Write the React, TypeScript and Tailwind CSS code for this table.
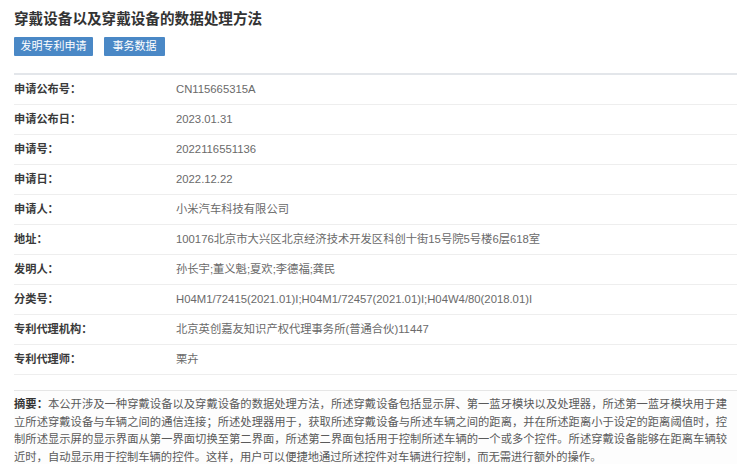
const rows: [string, string][] = [
  ["申请公布号：", "CN115665315A"],
  ["申请公布日：", "2023.01.31"],
  ["申请号：", "2022116551136"],
  ["申请日：", "2022.12.22"],
  ["申请人：", "小米汽车科技有限公司"],
  ["地址：", "100176北京市大兴区北京经济技术开发区科创十街15号院5号楼6层618室"],
  ["发明人：", "孙长宇;董义魁;夏欢;李德福;龚民"],
  ["分类号：", "H04M1/72415(2021.01)I;H04M1/72457(2021.01)I;H04W4/80(2018.01)I"],
  ["专利代理机构：", "北京英创嘉友知识产权代理事务所(普通合伙)11447"],
  ["专利代理师：", "栗卉"],
]

export default function App() {
  return (
    <div
      className="w-[740px] h-[464px] overflow-hidden bg-white pl-[14px] pr-[3px] pt-[9px]"
      style={{ fontFamily: '"Liberation Sans", "Noto Sans CJK SC", sans-serif' }}
    >
      <h1 className="text-[14.6px] leading-[20px] font-bold text-[#333]">
        穿戴设备以及穿戴设备的数据处理方法
      </h1>

      <div className="mt-[8px] flex gap-[11px]">
        <button className="h-[19px] w-[79px] bg-[#4a88c6] text-white text-[11px] leading-[19px] rounded-[1px]">
          发明专利申请
        </button>
        <button className="h-[19px] w-[61px] bg-[#4a88c6] text-white text-[11px] leading-[19px] rounded-[1px]">
          事务数据
        </button>
      </div>

      <div className="mt-[17px] border-t-2 border-[#e3e6ea]">
        {rows.map(([label, value]) => (
          <div key={label} className="flex items-center h-[30px] border-b border-[#eeeeee]">
            <div className="w-[162px] shrink-0 text-[11.2px] font-bold text-[#3a3a3a]">{label}</div>
            <div className="text-[11.3px] text-[#6a6a6a]">{value}</div>
          </div>
        ))}
      </div>

      {/* abstract */}
      <div className="mt-[15px] border-t border-[#e6e6e6] bg-[#fdfdfd] pt-[5px] pr-[10px]">
        <p className="text-[11.3px] leading-[17.5px] text-[#5a5a5a] text-justify [text-spacing-trim:space-all]">
          <span className="font-bold text-[#333]">摘要：</span>
          本公开涉及一种穿戴设备以及穿戴设备的数据处理方法，所述穿戴设备包括显示屏、第一蓝牙模块以及处理器，所述第一蓝牙模块用于建立所述穿戴设备与车辆之间的通信连接；所述处理器用于，获取所述穿戴设备与所述车辆之间的距离，并在所述距离小于设定的距离阈值时，控制所述显示屏的显示界面从第一界面切换至第二界面，所述第二界面包括用于控制所述车辆的一个或多个控件。所述穿戴设备能够在距离车辆较近时，自动显示用于控制车辆的控件。这样，用户可以便捷地通过所述控件对车辆进行控制，而无需进行额外的操作。
        </p>
      </div>
    </div>
  )
}
